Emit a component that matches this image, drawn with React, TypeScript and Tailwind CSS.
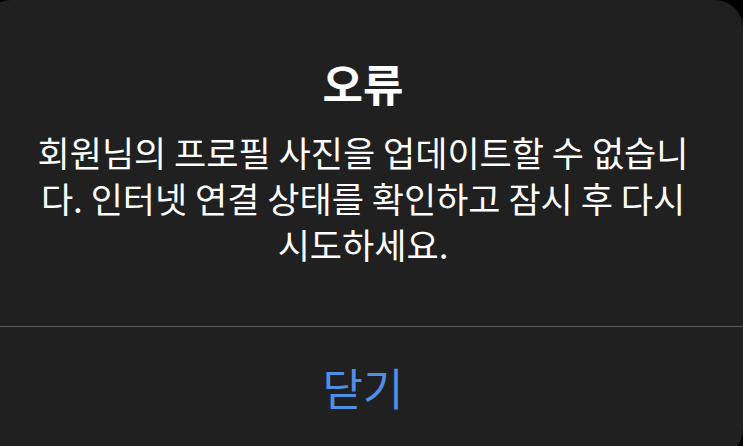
import React from "react";

export default function App() {
  return (
    <div className="w-[743px] h-[446px] overflow-hidden bg-black" style={{ fontFamily: '"Noto Sans CJK KR", "Noto Sans", sans-serif' }}>
      <div className="ml-[-17px] w-[760px] h-[457px] rounded-[28px] bg-[#202020] flex flex-col">
        <div className="flex flex-col items-center pt-[57px] h-[326px]">
          <div className="text-[44px] leading-[52px] font-semibold text-white">오류</div>
          <div className="mt-[20px] text-[35px] leading-[46px] text-white text-center whitespace-nowrap">
            회원님의 프로필 사진을 업데이트할 수 없습니
            <br />
            다. 인터넷 연결 상태를 확인하고 잠시 후 다시
            <br />
            시도하세요.
          </div>
        </div>
        <div className="h-[1px] bg-[#5e5e5e]" />
        <div className="flex-1 flex items-center justify-center pb-[10px]">
          <span className="text-[44px] leading-[52px] text-[#4f8fe6]">닫기</span>
        </div>
      </div>
    </div>
  );
}
